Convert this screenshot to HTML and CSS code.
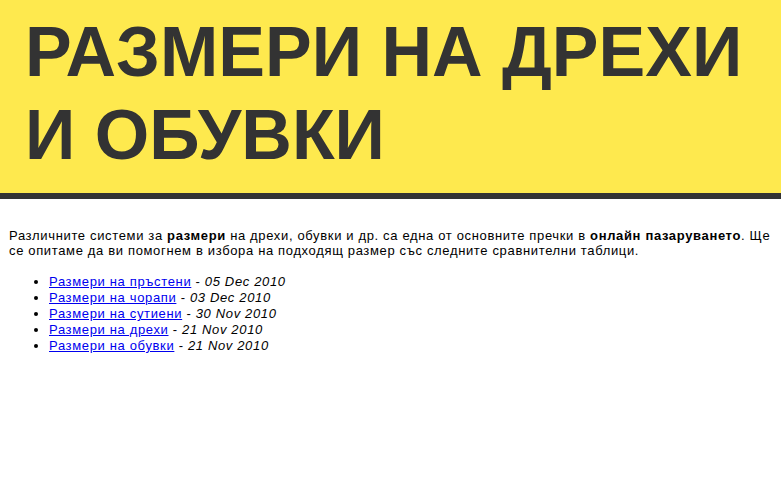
FILE: index.html
```html
<!DOCTYPE html>
<html lang="bg">
<head>
<meta charset="utf-8">
<title>Размери на дрехи и обувки</title>
<link rel="stylesheet" href="styles.css">
</head>
<body>
<header class="masthead">
  <h1 class="title">РАЗМЕРИ НА ДРЕХИ И ОБУВКИ</h1>
</header>
<main class="content">
  <p class="intro">Различните системи за <strong>размери</strong> на дрехи, обувки и др. са една от основните пречки в <strong>онлайн пазаруването</strong>. Ще се опитаме да ви помогнем в избора на подходящ размер със следните сравнителни таблици.</p>
  <ul class="articles">
    <li><a href="#">Размери на пръстени</a> - <em>05 Dec 2010</em></li>
    <li><a href="#">Размери на чорапи</a> - <em>03 Dec 2010</em></li>
    <li><a href="#">Размери на сутиени</a> - <em>30 Nov 2010</em></li>
    <li><a href="#">Размери на дрехи</a> - <em>21 Nov 2010</em></li>
    <li><a href="#">Размери на обувки</a> - <em>21 Nov 2010</em></li>
  </ul>
</main>
</body>
</html>
```
FILE: styles.css
```css
html, body {
  margin: 0;
  padding: 0;
  background: #fff;
}
body {
  font-family: "Liberation Sans", Arial, sans-serif;
  font-size: 13px;
  line-height: 15px;
  letter-spacing: 0.65px;
  color: #000;
}
.masthead {
  background: #fee94e;
  border-bottom: 6px solid #333;
  padding: 11px 20px 16px 25px;
}
.title {
  margin: 0;
  font-family: "Liberation Sans", Arial, sans-serif;
  font-weight: bold;
  font-size: 70px;
  line-height: 83px;
  letter-spacing: 0;
  color: #333;
  max-width: 730px;
}
.content {
  padding: 29px 2px 0 9px;
}
.intro {
  margin: 0;
}
.articles {
  margin: 16px 0 0 0;
  padding-left: 40px;
}
.articles li {
  line-height: 16px;
}
.articles a {
  color: #0000ee;
}
.articles em {
  font-style: italic;
}
```
